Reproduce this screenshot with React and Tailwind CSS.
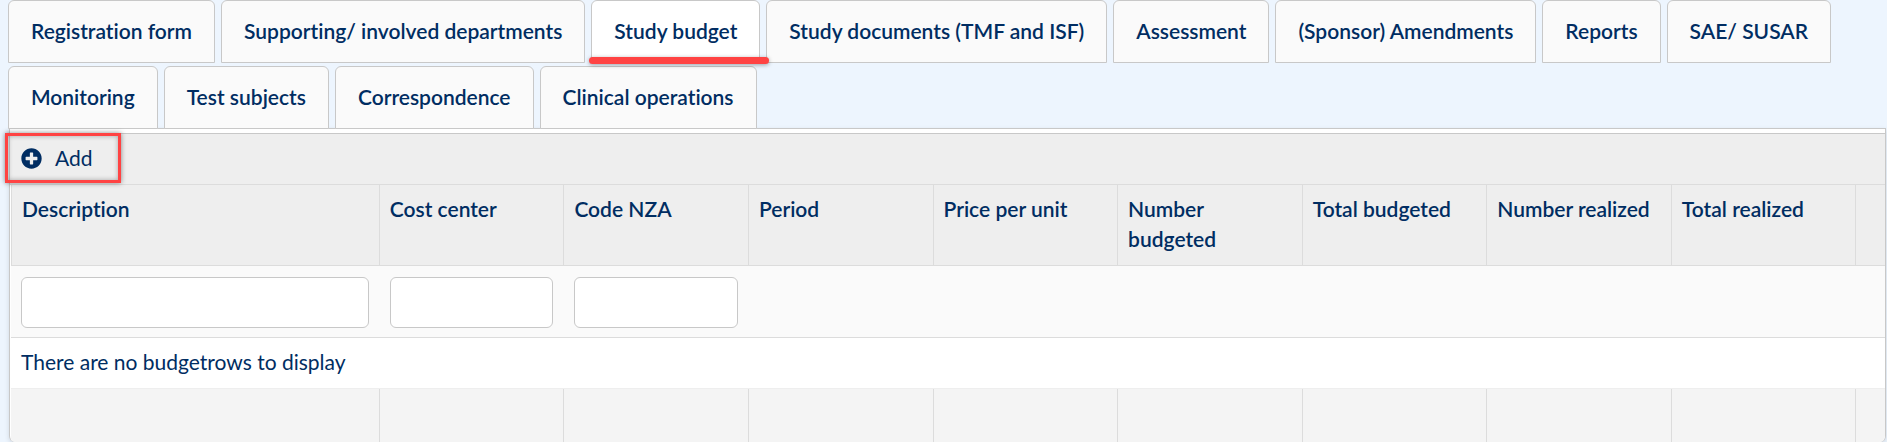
import { useState } from 'react'
import { FaPlusCircle } from 'react-icons/fa'

const TABS = [
  'Registration form',
  'Supporting/ involved departments',
  'Study budget',
  'Study documents (TMF and ISF)',
  'Assessment',
  '(Sponsor) Amendments',
  'Reports',
  'SAE/ SUSAR',
  'Monitoring',
  'Test subjects',
  'Correspondence',
  'Clinical operations',
]

const COLUMNS = [
  { label: 'Description', filter: true },
  { label: 'Cost center', filter: true },
  { label: 'Code NZA', filter: true },
  { label: 'Period' },
  { label: 'Price per unit' },
  { label: 'Number budgeted' },
  { label: 'Total budgeted' },
  { label: 'Number realized' },
  { label: 'Total realized' },
]

function Tab({ label, active, onSelect }) {
  return (
    <button
      type="button"
      role="tab"
      aria-selected={active}
      onClick={onSelect}
      className={`relative h-[63px] rounded-t-md border border-[#c8c8c8] px-[22px] pb-[2px] font-semibold whitespace-nowrap ${active ? 'bg-white' : 'bg-[#fafafa]'}`}
    >
      {label}
      {active && (
        <span
          className="absolute -left-[3px] -right-[10px] -bottom-[2px] z-10 h-[7px] rounded-full bg-[#ff4343] shadow-[0_1px_4px_rgba(0,0,0,0.35)]"
          aria-hidden="true"
        />
      )}
    </button>
  )
}

function BudgetTable() {
  return (
    <table className="w-full table-fixed border-separate border-spacing-0 text-left">
      <colgroup>
        {COLUMNS.map((col, i) => (
          <col key={col.label} className={i === 0 ? 'w-[19.68%]' : 'w-[9.85%]'} />
        ))}
        <col />
      </colgroup>
      <thead>
        <tr className="h-[81px] bg-[#eeeeee]">
          {COLUMNS.map(col => (
            <th
              key={col.label}
              scope="col"
              className="border-r border-b border-[#dcdcdc] px-[10px] pt-[9px] pb-[11px] align-top font-semibold first:border-l"
            >
              {col.label}
            </th>
          ))}
          <td className="border-b border-[#dcdcdc]" />
        </tr>
        <tr className="h-[72px] bg-[#fafafa]">
          {COLUMNS.map(col => (
            <td key={col.label} className="border-b border-[#dcdcdc] pt-px pr-[11px] pl-[10px]">
              {col.filter && (
                <input
                  type="text"
                  aria-label={`Filter ${col.label}`}
                  className="block h-[51px] w-full rounded-md border border-[#c8c8c8] bg-white px-3"
                />
              )}
            </td>
          ))}
          <td className="border-b border-[#dcdcdc]" />
        </tr>
      </thead>
      <tbody>
        <tr className="h-[51px] bg-white">
          <td colSpan={COLUMNS.length + 1} className="border-b border-[#eeeeee] px-[10px] pb-[2px]">
            There are no budgetrows to display
          </td>
        </tr>
      </tbody>
      <tfoot>
        <tr className="h-[53px] bg-[#f4f4f4]">
          {COLUMNS.map(col => (
            <td key={col.label} className="border-r border-[#dcdcdc]" />
          ))}
          <td />
        </tr>
      </tfoot>
    </table>
  )
}

export default function App() {
  const [activeTab, setActiveTab] = useState('Study budget')

  return (
    <div className="min-h-screen bg-[#edf5fe] font-['Lato',sans-serif] text-[21px] leading-[30px] text-[#002d62] [font-variant-ligatures:none]">
      <div role="tablist" className="relative -mb-px flex flex-wrap gap-x-[6px] gap-y-[3px] pl-2">
        {TABS.map(label => (
          <Tab
            key={label}
            label={label}
            active={label === activeTab}
            onSelect={() => setActiveTab(label)}
          />
        ))}
      </div>

      <main className="mr-px ml-[9px] rounded-b-md border border-b-0 border-[#c8c8c8] bg-white pt-1 shadow-[0_2px_5px_rgba(0,0,0,0.12)]">
        {/* Toolbar */}
        <div className="relative flex h-[52px] items-center border-t border-b border-t-[#c8c8c8] border-b-[#dcdcdc] bg-[#eeeeee] pb-[2px] pl-[11px]">
          <button type="button" className="flex items-center gap-[13px]">
            <FaPlusCircle className="size-[21px]" aria-hidden="true" />
            Add
          </button>
          <span
            className="absolute -left-[5px] -top-px h-[50px] w-[116px] border-3 border-[#ff4343] shadow-[0_0_5px_rgba(0,0,0,0.45),inset_0_0_5px_rgba(0,0,0,0.3)]"
            aria-hidden="true"
          />
        </div>
        <div className="overflow-hidden rounded-b-md pl-px">
          <BudgetTable />
        </div>
      </main>
    </div>
  )
}
